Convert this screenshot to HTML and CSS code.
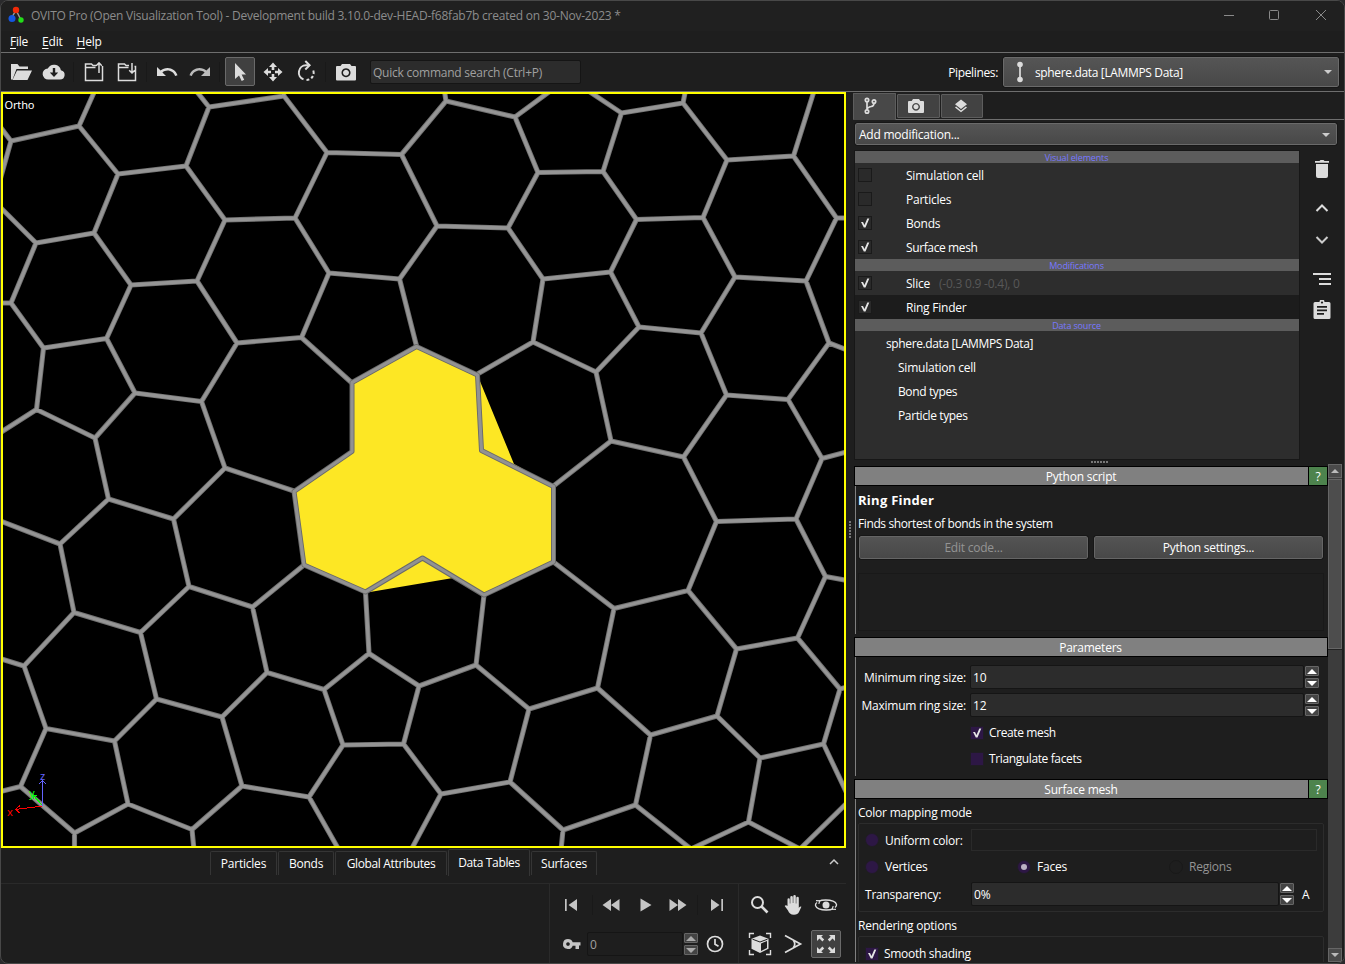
FILE: index.html
```html
<!DOCTYPE html>
<html lang="en">
<head>
<meta charset="utf-8">
<title>OVITO Pro</title>
<link rel="stylesheet" href="styles.css">
</head>
<body>
<div class="window">
  <header class="titlebar">
    <svg class="logo" width="16" height="18" viewBox="0 0 16 18"><path d="M8 4L3 13M8 4L13 14" stroke="#999" stroke-width="1.5"/><circle cx="8" cy="4" r="3.2" fill="#f02a08"/><circle cx="4" cy="12.500" r="3.500" fill="#1456e0"/><circle cx="13" cy="14" r="2.700" fill="#22dd18"/></svg>
    <span class="title">OVITO Pro (Open Visualization Tool) - Development build 3.10.0-dev-HEAD-f68fab7b created on 30-Nov-2023 *</span>
    <svg class="winctl" width="104" height="12" viewBox="0 0 104 12" fill="none" stroke="#8a8a8a"><path d="M0 6.500h10M92 1l10 10M102 1L92 11"/><rect x="45.500" y="1.500" width="9" height="9" rx="1"/></svg>
  </header>
  <nav class="menu"><span><u>F</u>ile</span><span><u>E</u>dit</span><span><u>H</u>elp</span></nav>

  <div class="toolbar">
    <div class="tool"><svg width="24" height="24" viewBox="0 0 24 24"><path d="M2 19.500V4h6.500l2 2.500H19V9H7.500L3.500 19.500zM3.500 20L8 10.500h15L18.500 20z"/></svg></div>
    <div class="tool"><svg width="24" height="24" viewBox="0 0 24 24"><path fill-rule="evenodd" d="M18.900 10.200A7 7 0 0 0 5.800 8.500 5.500 5.500 0 0 0 6.500 19.500H18a4.700 4.700 0 0 0 .9-9.300zM10.800 8h2.400v4.500h3L12 17l-4.200-4.500h3z"/></svg></div>
    <i class="sep"></i>
    <div class="tool"><svg width="24" height="24" viewBox="0 0 24 24" class="line"><path d="M14 5.500h-3L9.500 4H3.500v16.500h17V6M3.500 7.500h10M17 13V3M14.200 5.700L17 2.800l2.800 2.900"/></svg></div>
    <div class="tool"><svg width="24" height="24" viewBox="0 0 24 24" class="line"><path d="M14 5.500h-3L9.500 4H3.500v16.500h17V6.500h-1M3.500 7.500h10M17 3v10M14.200 10.200L17 13l2.800-2.800"/></svg></div>
    <i class="sep narrow"></i>
    <div class="tool"><svg width="24" height="24" viewBox="0 0 24 24"><path d="M12.500 8c-2.650 0-5.050 1-6.900 2.600L2 7v9h9l-3.600-3.600c1.400-1.200 3.150-1.900 5.100-1.900 3.550 0 6.550 2.300 7.600 5.500l2.400-.8C21.100 11 17.150 8 12.500 8z"/></svg></div>
    <div class="tool dim"><svg width="24" height="24" viewBox="0 0 24 24"><path d="M11.500 8c2.650 0 5.050 1 6.900 2.600L22 7v9h-9l3.600-3.600c-1.400-1.200-3.150-1.900-5.100-1.900-3.550 0-6.550 2.300-7.600 5.500l-2.400-.8C2.900 11 6.850 8 11.500 8z"/></svg></div>
    <i class="sep"></i>
    <div class="tool"><div class="pressed"><svg width="24" height="24" viewBox="0 0 24 24"><path d="M7 3v16l4-3.500L13.700 21l2.500-1.200-2.600-5.300H18z"/></svg></div></div>
    <div class="tool"><svg width="24" height="24" viewBox="0 0 24 24"><path d="M12 2.500L16 7h-2.700v3h-2.600V7H8zM12 21.500L8 17h2.700v-3h2.600v3H16zM2.500 12L7 8v2.700h3v2.600H7V16zM21.500 12L17 16v-2.700h-3v-2.600h3V8z"/></svg></div>
    <div class="tool"><svg width="24" height="24" viewBox="0 0 24 24" fill="none" stroke="#dcdcdc" stroke-width="2"><path d="M14.500 5.300H12A7.300 7.300 0 0 0 9.500 19.400M12.500 20a8 8 0 0 0 2.800-.6M17.200 18.300a8 8 0 0 0 1.700-2.300M19.600 14a8 8 0 0 0-.3-3.500"/><path d="M11.300 1l4.300 4.300-4.300 4.200"/></svg></div>
    <i class="sep narrow"></i>
    <div class="tool"><svg width="24" height="24" viewBox="0 0 24 24"><path fill-rule="evenodd" d="M8 4h8l1.500 2H21a1 1 0 0 1 1 1v12.500a1 1 0 0 1-1 1H3a1 1 0 0 1-1-1V7a1 1 0 0 1 1-1h3.500zM12 8.200a4.500 4.500 0 1 0 .01 0zM12 9.800a3 3 0 1 1-.01 0z"/></svg></div>
    <div class="search">Quick command search (Ctrl+P)</div>
    <span class="pipelabel">Pipelines:</span>
    <div class="combo pipeline">
      <svg width="10" height="22" viewBox="0 0 10 22"><path d="M5 3v16" stroke="#c8c8c8" stroke-width="2"/><circle cx="5" cy="3.500" r="2.800"/><circle cx="5" cy="18.500" r="2.800"/></svg>
      <span class="grow">sphere.data [LAMMPS Data]</span><i class="caret"></i>
    </div>
  </div>

  <div class="content">
    <div class="left">
      <div class="viewport">
        <svg class="scene" width="841" height="752" viewBox="3 94 841 752">
          <defs>
            <path id="bonds" d="M-5 120L11 141L79 126L96 88M11 141L0 180M190 83L209 107L284 96L282 88M79 126L118 174L186 166L209 107M284 96L327 152.500L401.500 154.500L446 101L444 88M186 166L225 220L295 218L327 152.500M401.500 154.500L437 226L508 228L538 172.500L515 117L446 101M515 117L553 89M-3 204L36 243L94 233L118 174M36 243L11 303L-5 303M11 303L43.500 348L106.500 338.500L131 285L94 233M131 285L197 281L225 220M197 281L237 343L301.500 337.500L329 273L295 218M329 273L399.500 279L437 226M399.500 279L416.500 346M301.500 337.500L352 383M43.500 348L36.500 409.500L-5 436M36.500 409.500L95 438L135 393L106.500 338.500M135 393L201.500 401.500L237 343M95 438L108.500 499L60 544L-5 519M201.500 401.500L225 468L294 491M108.500 499L173.500 519L225 468M60 544L74 612.500L24 666L-5 657M74 612.500L140.500 632.500L189 586.500L173.500 519M189 586.500L252.500 607L304 565M24 666L46 728.500L20.500 786.500L-5 793M140.500 632.500L156.500 699L114.500 741L46 728.500M114.500 741L128 804L74.500 833L20.500 786.500M74.500 833V850M156.500 699L222 717L267 672.500L252.500 607M267 672.500L324 689.500L369 653.500L365.500 592M222 717L242 786L192 829.500L128 804M192 829.500L194 850M324 689.500L343 745L309 797L242 786M309 797L339 850M343 745L403.500 744L419 686L369 653.500M403.500 744L441 794L411 850M419 686L476 665L484 595M441 794L510 782L529 709L476 665M510 782L563 830L561 850M563 830L635.500 805L650.500 735L597.500 688L529 709M597.500 688L614 608.500L553.500 562M614 608.500L688 590.500L716.500 521.500L683.500 457L611 441L553.500 486M688 590.500L736.500 649L797.500 638L825.500 576.500L796 519L716.500 521.500M825.500 576.500L850 581M736.500 649L717 716L650.500 735M717 716L760 758L748.500 822L691 849L635.500 805M760 758L823.500 744L850 800M797.500 638L840 689L823.500 744M840 689L850 686M748.500 822L800 849L850 800M796 519L822 458.500L788 399.500L726.500 395L683.500 457M822 458.500L850 451M611 441L596 372L533 342L477.500 374M533 342L543 279L610.500 272L639 327L596 372M543 279L508 228M538 172.500L603 171.500L621.500 113L587 90M621.500 113L683 103L686 88M603 171.500L636.500 219.500L610.500 272M636.500 219.500L703 217.500L727 160L683 103M727 160L793.500 156L815 88M793.500 156L836.500 218L850 218M836.500 218L806 281L735 277L703 217.500M735 277L701 333L639 327M701 333L726.500 395M806 281L829 343L850 351M829 343L788 399.500"/>
            <path id="ring" d="M416.500 346.500L477.500 375L481.500 450.500L553.500 486.500V562L484 595L422.500 558L365.500 592L304 565L294 491.500L352 451.500V382.500Z"/>
          </defs>
          <path d="M416 346L477 374L514 464L553 486V562L484 595L453 578L370 592L304 565L294 491L352 451V383Z" fill="#fde724"/>
          <g fill="none" stroke-linejoin="round">
            <use href="#bonds" stroke="#737373" stroke-width="5.100"/>
            <use href="#bonds" stroke="#959595" stroke-width="3.300"/>
            <use href="#ring" stroke="#696969" stroke-width="5"/>
            <use href="#ring" stroke="#929292" stroke-width="3.200"/>
          </g>
          <g fill="none" stroke-width="1" shape-rendering="crispEdges">
            <path stroke="#0f0" d="M42.500 805.500L33 795M33 799v-4h4"/>
            <path stroke="#6464ff" d="M42.500 806V780.500M38.500 784.500l4-4 4 4"/>
            <path stroke="#f00" d="M42.500 806L15.500 809.500M20 805.500l-4.500 4 5 4"/>
          </g>
          <g class="axis"><text x="7" y="816" fill="#f00">x</text><text x="29" y="797" fill="#0f0">y</text><text x="40" y="780" fill="#6464ff">z</text></g>
          <text class="ortho" x="4.500" y="109" textLength="30">Ortho</text>
        </svg>
      </div>
      <div class="datatabs">
        <span class="dtab t1">Particles</span><span class="dtab t2">Bonds</span><span class="dtab t3">Global Attributes</span><span class="dtab t4 on">Data Tables</span><span class="dtab t5">Surfaces</span>
        <svg class="up" width="10" height="8" viewBox="0 0 10 8" fill="none" stroke="#ccc" stroke-width="1.500"><path d="M1 6l4-4 4 4"/></svg>
      </div>
      <div class="bottom">
        <div class="anim">
          <div class="play">
            <svg width="14" height="14" viewBox="0 0 14 14"><path d="M1 1h1.700v12H1zM13 1v12L4.500 7z"/></svg><i></i>
            <svg width="18" height="14" viewBox="0 0 18 14"><path d="M9 1v12L0.500 7zM17.500 1v12L9 7z"/></svg>
            <svg width="12" height="14" viewBox="0 0 12 14"><path d="M.5 0.500v13L11.500 7z"/></svg>
            <svg width="18" height="14" viewBox="0 0 18 14"><path d="M.5 1v12L9 7zM9 1v12L17.500 7z"/></svg><i></i>
            <svg width="14" height="14" viewBox="0 0 14 14"><path d="M11.300 1H13v12h-1.700zM1 1v12l8.500-6z"/></svg>
          </div>
          <div class="time">
            <svg width="20" height="12" viewBox="0 0 20 12"><path fill-rule="evenodd" d="M6 1a5 5 0 0 1 4.700 3.300H18.500v3.200H17V11h-3.500V7.700h-2.800A5 5 0 1 1 6 1zM6 4.200a1.800 1.800 0 1 0 .01 0z"/></svg>
            <div class="field frame">0</div>
            <div class="spin dim"><b class="u"></b><b class="d"></b></div>
            <svg class="clock" width="18" height="18" viewBox="0 0 18 18" fill="none" stroke="#ddd" stroke-width="1.700"><circle cx="9" cy="9" r="7.500"/><path d="M9 4v5.200l3.500 2"/></svg>
          </div>
        </div>
        <div class="nav">
          <div><svg width="20" height="20" viewBox="0 0 20 20" fill="none" stroke="#ddd"><circle cx="7.500" cy="7.500" r="5.500" stroke-width="2"/><path d="M11.500 11.500l6 6" stroke-width="2.600"/></svg></div>
          <div><svg width="20" height="22" viewBox="0 0 20 22"><path d="M4.500 12V5.500a1.150 1.150 0 0 1 2.300 0V9.500h.5V3.200a1.250 1.250 0 0 1 2.500 0V9h.5V2.300a1.250 1.250 0 0 1 2.500 0V9.500h.5V4a1.250 1.250 0 0 1 2.500 0V14c.5-1 1.400-2 2.600-1.300L16 18c-1 1.800-2.300 2.700-5 2.700-3.500 0-5-1.700-6-4.200L1.700 12c.4-1 1.800-1.300 2.800 0z"/></svg></div>
          <div><svg width="24" height="16" viewBox="0 0 24 16" fill="none" stroke="#ddd"><path stroke-width="1.400" d="M5 4.200C8 2.700 15 2.600 19 4.200c4.200 1.700 4.400 4.700 2 6.300M19 11.800c-3 1.500-10 1.600-14 0C.8 10.100.6 7.100 3 5.500"/><circle cx="12" cy="8" r="3.500" fill="#ddd" stroke="none"/><path d="M2 3.700l3.800.2-1 3M22 12.300l-3.800-.2 1-3" stroke-width="1.200"/></svg></div>
          <div><svg width="24" height="24" viewBox="0 0 24 24"><path fill="none" stroke="#ddd" stroke-width="1.400" d="M1.500 6V1.500H6M18 1.500h4.500V6M22.500 18v4.500H18M6 22.500H1.500V18"/><path d="M12 3.500l8.500 3.200v10L12 21 3.500 16.700v-10z"/><path fill="none" stroke="#1e1e1e" stroke-width="1" d="M4.500 7.200L12 10l7.500-2.800"/><path fill="#1e1e1e" d="M13 11.500l6-2.500v7l-6 3z"/></svg></div>
          <div><svg width="20" height="20" viewBox="0 0 20 20" fill="none" stroke="#ddd" stroke-width="1.700"><path d="M2 1.500L17.500 10 2 18.500M10.500 6.500a6 6 0 0 1 0 7"/></svg></div>
          <div><span class="pressed max"><svg width="20" height="20" viewBox="0 0 20 20"><path d="M1 1h6L5.300 2.700l2.900 2.900-1.800 1.800-2.900-2.900L1 7zM19 1v6l-2.500-2.500-2.900 2.900-1.800-1.800 2.900-2.900L13 1zM1 19v-6l2.500 2.500 2.900-2.900 1.800 1.800-2.900 2.900L7 19zM19 19h-6l1.700-1.700-2.900-2.900 1.800-1.800 2.900 2.900L19 13z"/></svg></span></div>
        </div>
      </div>
    </div>

    <div class="divider"><i class="dots v"></i></div>

    <aside class="right">
      <div class="tabs">
        <div class="tab on"><svg width="14" height="18" viewBox="0 0 14 18" fill="none" stroke="#ddd" stroke-width="1.700"><circle cx="4" cy="3" r="1.700"/><circle cx="4" cy="14.500" r="1.700"/><circle cx="11" cy="4.500" r="1.700"/><path d="M4 4.700v8M11 6.200c0 3.500-2 3-4 3.600-1.500.5-2.500 1-3 2.500"/></svg></div>
        <div class="tab"><svg width="18" height="16" viewBox="0 0 18 16"><path fill-rule="evenodd" d="M6 1h6l1.300 2H16a1 1 0 0 1 1 1v10a1 1 0 0 1-1 1H2a1 1 0 0 1-1-1V4a1 1 0 0 1 1-1h2.700zM9 5a3.900 3.900 0 1 0 .01 0zM9 6.300a2.500 2.500 0 1 1-.01 0z"/></svg></div>
        <div class="tab t3"><svg width="14" height="14" viewBox="0 0 14 14"><path d="M7 .5l6 4.700L7 10 1 5.200zM7 11.500l4.900-3.900L13 8.500 7 13.300 1 8.500l1.100-.9z"/></svg></div>
      </div>
      <div class="combo addmod"><span class="grow">Add modification...</span><i class="caret"></i></div>
      <div class="pipe">
        <div class="list">
          <div class="head">Visual elements</div>
          <div class="row"><i class="cb"></i><span>Simulation cell</span></div>
          <div class="row"><i class="cb"></i><span>Particles</span></div>
          <div class="row"><i class="cb ck"></i><span>Bonds</span></div>
          <div class="row"><i class="cb ck"></i><span class="tight">Surface mesh</span></div>
          <div class="head">Modifications</div>
          <div class="row"><i class="cb ck"></i><span>Slice</span><span class="info">(-0.3 0.9 -0.4), 0</span></div>
          <div class="row sel"><i class="cb ck"></i><span>Ring Finder</span></div>
          <div class="head">Data source</div>
          <div class="row src"><span class="tight">sphere.data [LAMMPS Data]</span></div>
          <div class="row sub"><span>Simulation cell</span></div>
          <div class="row sub"><span class="tight">Bond types</span></div>
          <div class="row sub"><span class="tight">Particle types</span></div>
        </div>
        <div class="side">
          <svg width="16" height="20" viewBox="0 0 16 20"><path d="M1 2h4.500l1-1h3l1 1H15v1.800H1zM2 5h12v12a2 2 0 0 1-2 2H4a2 2 0 0 1-2-2z"/></svg>
          <svg class="s2" width="14" height="10" viewBox="0 0 14 10" fill="none" stroke="#ddd" stroke-width="2"><path d="M1.500 8L7 2.500 12.500 8"/></svg>
          <svg class="s3" width="14" height="10" viewBox="0 0 14 10" fill="none" stroke="#ccc" stroke-width="2"><path d="M1.500 2L7 7.500 12.500 2"/></svg>
          <svg class="s4" width="18" height="14" viewBox="0 0 18 14"><path d="M0 1h18v2H0zM6 6h12v2H6zM6 11h12v2H6z"/></svg>
          <svg class="s5" width="18" height="20" viewBox="0 0 18 20"><path fill-rule="evenodd" d="M2 2h4.500a2.500 2.500 0 0 1 5 0H16a1.500 1.500 0 0 1 1.500 1.500v14A1.500 1.500 0 0 1 16 19H2a1.500 1.500 0 0 1-1.500-1.500v-14A1.500 1.500 0 0 1 2 2zM9 1.500a1 1 0 1 0 .01 0zM4 6v1.700h10V6zM4 9.500v1.700h10V9.500zM4 13v1.700h7V13z"/></svg>
        </div>
      </div>
      <div class="hsplit"><i class="dots h"></i></div>
      <div class="scroll">
        <div class="rolls">
          <div class="rhead"><span>Python script</span><em>?</em></div>
          <section class="rbody r1">
            <h3>Ring Finder</h3>
            <p>Finds shortest of bonds in the system</p>
            <div class="btns"><div class="btn off">Edit code...</div><div class="btn">Python settings...</div></div>
            <div class="outbox"></div>
          </section>
          <div class="rhead"><span>Parameters</span></div>
          <section class="rbody r2">
            <div class="prow"><label>Minimum ring size:</label><div class="field">10</div><div class="spin"><b class="u"></b><b class="d"></b></div></div>
            <div class="prow"><label>Maximum ring size:</label><div class="field">12</div><div class="spin"><b class="u"></b><b class="d"></b></div></div>
            <div class="crow"><i class="cb p ck"></i>Create mesh</div>
            <div class="crow"><i class="cb p"></i>Triangulate facets</div>
          </section>
          <div class="rhead"><span>Surface mesh</span><em>?</em></div>
          <section class="rbody r3">
            <p class="gt">Color mapping mode</p>
            <div class="group">
              <div class="uni"><i class="radio"></i><span>Uniform color:</span><div class="color"></div></div>
              <div class="radios"><span><i class="radio"></i>Vertices</span><span><i class="radio on"></i>Faces</span><span class="off"><i class="radio no"></i>Regions</span></div>
              <div class="trans"><span>Transparency:</span><div class="field">0%</div><div class="spin"><b class="u"></b><b class="d"></b></div><span class="a">A</span></div>
            </div>
            <p class="gt ro">Rendering options</p>
            <div class="group g2"><i class="cb p ck"></i>Smooth shading</div>
          </section>
        </div>
        <div class="sbar"><div class="sb"><b class="u"></b></div><div class="thumb"></div><div class="track"></div><div class="sb"><b class="d"></b></div></div>
      </div>
    </aside>
  </div>
</div>
</body>
</html>
```
FILE: styles.css
```css
* { box-sizing: border-box; }
body { margin: 0; background: #2a2a2c; overflow: hidden; color: #fff; font: 12px/16px "Open Sans", "Noto Sans", sans-serif; letter-spacing: -0.23px; }
svg { display: block; fill: #dcdcdc; flex: none; }
svg[fill="none"] { fill: none; }
.line { fill: none; stroke: #dcdcdc; stroke-width: 1.5; }
.window { width: 1345px; height: 964px; background: #1e1e1e; border: 1px solid #484848; border-radius: 8px; overflow: hidden; display: flex; flex-direction: column; white-space: nowrap; }
.titlebar { height: 30px; flex: none; display: flex; align-items: center; padding-left: 7px; background: #202020; color: #8c8c8c; }
.title { margin-left: 7px; }
.logo { margin-top: -2px; }
.winctl { margin-left: auto; margin-right: 16px; margin-top: -2px; }
.menu { height: 21px; flex: none; display: flex; gap: 14px; padding: 3px 0 0 9px; }
.menu u { text-underline-offset: 2px; }
.toolbar { height: 40px; flex: none; border-top: 1px solid #6e6e6e; border-bottom: 1px solid #6e6e6e; display: flex; align-items: center; padding: 0 0 1px 3px; }
.tool { width: 33px; display: flex; justify-content: center; }
.dim > svg { fill: #bbb; }
.sep { width: 7.500px; height: 20px; background: linear-gradient(#191919, #191919) center / 1px 100% no-repeat; }
.sep.narrow { width: 6.500px; }
.pressed { width: 30px; height: 29px; border: 1px solid #6a6a6a; border-radius: 2px; background: #404040; display: flex; align-items: center; justify-content: center; }
.search { width: 211px; height: 24px; margin-left: 8px; border: 1px solid #151515; border-radius: 2px; background: #2c2c2c; color: #a0a0a0; padding: 4px 2px; }
.pipelabel { margin-left: auto; margin-right: 5px; padding-top: 2px; letter-spacing: -0.35px; }
.combo { display: flex; align-items: center; border: 1px solid #6a6a6a; border-radius: 2px; background: linear-gradient(#555, #484848); outline: 1px solid #171717; }
.pipeline { width: 336px; height: 30px; margin-right: 5px; padding: 1px 6px 0 11px; letter-spacing: -0.35px; }
.pipeline .grow { padding-top: 1px; }
.pipeline svg { margin-right: 10px; }
.grow { flex: 1; }
.caret { border: 4px solid transparent; border-top-color: #ccc; border-bottom: 0; }
.content { flex: 1; display: flex; min-height: 0; }
.left { width: 845px; display: flex; flex-direction: column; }
.viewport { height: 756px; flex: none; border: 2px solid #ff0; background: #000; }
.scene { fill: none; }
.axis { font: 11px "Noto Sans", sans-serif; }
.ortho { fill: #fff; font: 11px "Noto Sans", sans-serif; letter-spacing: 0; }
.datatabs { height: 36px; flex: none; display: flex; padding: 3px 0 0 209px; border-bottom: 1px solid #2a2a2a; }
.dtab { height: 24px; border: 1px solid #353535; border-bottom: 0; border-radius: 2px 2px 0 0; text-align: center; padding-top: 4px; margin-right: 1px; }
.t1 { width: 67px; }
.t2 { width: 56px; }
.t3 { width: 112px; }
.t4 { width: 82px; }
.t5 { width: 66px; }
.t3, .t4 { letter-spacing: -0.35px; }
.dtab.on { height: 27px; margin-top: -2px; padding-top: 5px; }
.up { margin: 7px 7px 0 auto; }
.bottom { flex: 1; display: flex; justify-content: flex-end; }
.anim { width: 189px; border-left: 1px solid #2a2a2a; padding-left: 13px; }
.play { height: 42px; display: flex; align-items: center; padding-left: 1px; }
.play svg, .time > svg { fill: #c4c4c4; }
.play i { width: 1px; height: 20px; background: #191919; margin: 0 9px 0 14px; }
.play svg:nth-of-type(2) { margin-right: 15px; }
.play svg:nth-of-type(3) { margin-left: 5px; margin-right: 17px; }
.play i:nth-of-type(2) { margin: 0 12px 0 10px; }
.time { display: flex; align-items: center; height: 36px; margin-left: -1px; }
.time > svg.clock { fill: none; margin-left: 8px; }
.field { height: 24px; border: 1px solid #151515; border-radius: 2px; background: #2c2c2c; padding: 4px 2px; font-size: 12px; }
.frame { width: 96px; margin-left: 5px; background: #1e1e1e; color: #a0a0a0; }
.spin { width: 14px; display: flex; flex-direction: column; gap: 2px; margin-left: 1px; flex: none; }
.spin b { height: 10px; width: 14px; border: 1px solid #666; border-radius: 1px; background: #444; display: flex; justify-content: center; align-items: center; }
.u::before { content: ""; border: 5px solid transparent; border-top: 0; border-bottom-color: #fff; }
.d::before { content: ""; border: 5px solid transparent; border-bottom: 0; border-top-color: #fff; }
.dim .u::before { border-bottom-color: #aaa; }
.dim .d::before { border-top-color: #aaa; }
.nav { width: 108px; border-left: 1px solid #2a2a2a; display: grid; grid-template-columns: repeat(3, 33px); grid-template-rows: 41px 38px; padding-left: 4px; }
.nav > div { display: flex; align-items: center; justify-content: center; }
.max { height: 28px; flex: none; }
.divider { width: 8px; display: flex; align-items: center; justify-content: center; }
.dots { background: repeating-linear-gradient(#777 0 2px, transparent 2px 3px); }
.dots.v { width: 2px; height: 17px; margin-top: 4px; }
.dots.h { width: 17px; height: 2px; background: repeating-linear-gradient(90deg, #777 0 2px, transparent 2px 3px); }
.right { flex: 1; display: flex; flex-direction: column; }
.tabs { height: 28px; flex: none; display: flex; align-items: flex-end; border-bottom: 1px solid #6e6e6e; }
.tab { width: 43px; height: 24px; margin: 0 0 1px 1px; border: 1px solid #5d5d5d; border-radius: 1px; background: #424242; display: flex; align-items: center; justify-content: center; padding-right: 5px; }
.tab.t3 { width: 42px; padding-right: 3px; }
.tab.on { width: 43px; height: 27px; margin: 0 0 -1px -1px; padding-right: 9px; padding-bottom: 3px; border-bottom: 0; background: #484848; }
.addmod { width: 482px; height: 22px; flex: none; margin: 3px 0 0 1px; padding: 1px 6px 0 3px; }
.addmod .grow { padding-top: 1px; }
.pipe { height: 310px; flex: none; display: flex; margin-top: 5px; }
.list { width: 446px; border: 1px solid #171717; background: #2d2d2d; }
.head { height: 12px; background: #5c5c5c; color: #7878ff; text-align: center; font-size: 9px; line-height: 13px; letter-spacing: -0.15px; padding-right: 1px; }
.row { height: 24px; display: flex; align-items: center; padding-left: 3px; }
.row span { padding-top: 2px; }
.tight { letter-spacing: -0.38px; }
.sel { background: #1c1c1c; }
.src { padding-left: 31px; }
.sub { padding-left: 43px; }
.info { color: #585858; margin-left: 9px; }
.cb { width: 14px; height: 14px; border: 1px solid #1a1a1a; margin-right: 34px; flex: none; background: #2a2a2a; display: block; }
.ck::after { content: ""; display: block; width: 12px; height: 12px; background: #e4e4e4; clip-path: polygon(2px 5px, 4px 5px, 5.500px 8px, 8.300px 1.500px, 10.300px 1.500px, 6.500px 10.500px, 4.800px 10.500px); }
.cb.p { background: #2d1745; border-color: #201c25; margin-right: 5px; }
.side { flex: 1; display: flex; flex-direction: column; align-items: center; padding-top: 9px; }
.s2 { margin-top: 24px; }
.s3 { margin-top: 22px; }
.s4 { margin-top: 27px; }
.s5 { margin-top: 14px; }
.hsplit { height: 4px; display: flex; align-items: center; justify-content: center; margin-top: 0; }
.scroll { flex: 1; min-height: 0; display: flex; margin-bottom: 1px; }
.rolls { width: 474px; padding-top: 2px; overflow: hidden; }
.rhead { height: 20px; border: 1px solid #000; display: flex; background: #808080; text-align: center; line-height: 19px; }
.rhead span { flex: 1; padding-right: 1px; }
.rhead em { width: 19px; border-left: 1px solid #000; background: #4d834d; font-style: normal; }
.rbody { margin: 0 0 3px 1px; border-left: 1px solid #808080; padding-left: 2px; overflow: hidden; }
.r1 { height: 148px; }
.r1 h3 { margin: 6px 0 0; font-size: 13px; line-height: 16px; letter-spacing: 0.27px; }
.r1 p { margin: 8px 0 4px; letter-spacing: -0.39px; }
.btns { display: flex; gap: 6px; padding-left: 1px; }
.btn { width: 229px; height: 23px; border: 1px solid #656565; border-radius: 2px; background: linear-gradient(#545454, #484848); outline: 1px solid #171717; text-align: center; line-height: 22px; }
.off { color: #949494; }
.outbox { width: 466px; height: 58px; margin-top: 14px; border: 1px solid #191919; }
.r2 { height: 119px; padding-top: 8px; }
.prow { display: flex; height: 24px; margin-bottom: 4px; }
.prow label { width: 108px; text-align: right; line-height: 26px; flex: none; }
.prow .field { width: 334px; margin-left: 4px; }
.prow .spin { margin-top: 1px; }
.prow + .crow { margin-top: 8px; }
.crow { display: flex; align-items: center; height: 16px; padding-left: 112px; margin-bottom: 10px; letter-spacing: -0.38px; }
.r3 { height: 170px; }
.gt { margin: 6px 0 0; }
.group { margin-left: 0; width: 466px; height: 89px; margin-top: 2px; border: 1px solid #2c2c2c; border-radius: 2px; padding: 5px 6px; }
.uni, .radios, .trans { display: flex; align-items: center; }
.uni span { width: 86px; margin-left: 6px; padding-top: 2px; }
.color { width: 347px; height: 22px; border: 1px solid #2a2a2a; }
.uni .radio { margin-right: 0; }
.radio { width: 14px; height: 14px; border-radius: 50%; background: #2d1745; border: 1px solid #201c25; flex: none; margin-right: 6px; display: flex; }
.radio.on::after { content: ""; width: 6px; height: 6px; border-radius: 50%; background: #bbb0c4; margin: auto; }
.radio.no { background: #1e1e1e; border-color: #191919; }
.radios { height: 31px; }
.radios span { width: 152px; display: flex; align-items: center; flex: none; }
.trans span { width: 106px; flex: none; padding-top: 1px; }
.trans .field { width: 308px; }
.trans .a { width: 10px; margin-left: 8px; }
.ro { margin-top: 6px; }
.g2 { display: flex; align-items: flex-start; padding-top: 9px; line-height: 16px; letter-spacing: -0.3px; }
.g2 .cb { margin-top: 1px; }
.sbar { width: 14px; display: flex; flex-direction: column; background: #3c3c3c; }
.sb { height: 14px; flex: none; border: 1px solid #666; background: #4a4a4a; display: flex; align-items: center; justify-content: center; }
.sb .u::before, .sb .d::before { display: block; border-left-width: 4px; border-right-width: 4px; }
.sb .u::before { border-bottom: 4px solid #bbb; }
.sb .d::before { border-top: 4px solid #bbb; }
.thumb { height: 170px; flex: none; border: 1px solid #666; background: #4d4d4d; margin-top: 1px; }
.track { flex: 1; border-top: 1px solid #222; }
```
